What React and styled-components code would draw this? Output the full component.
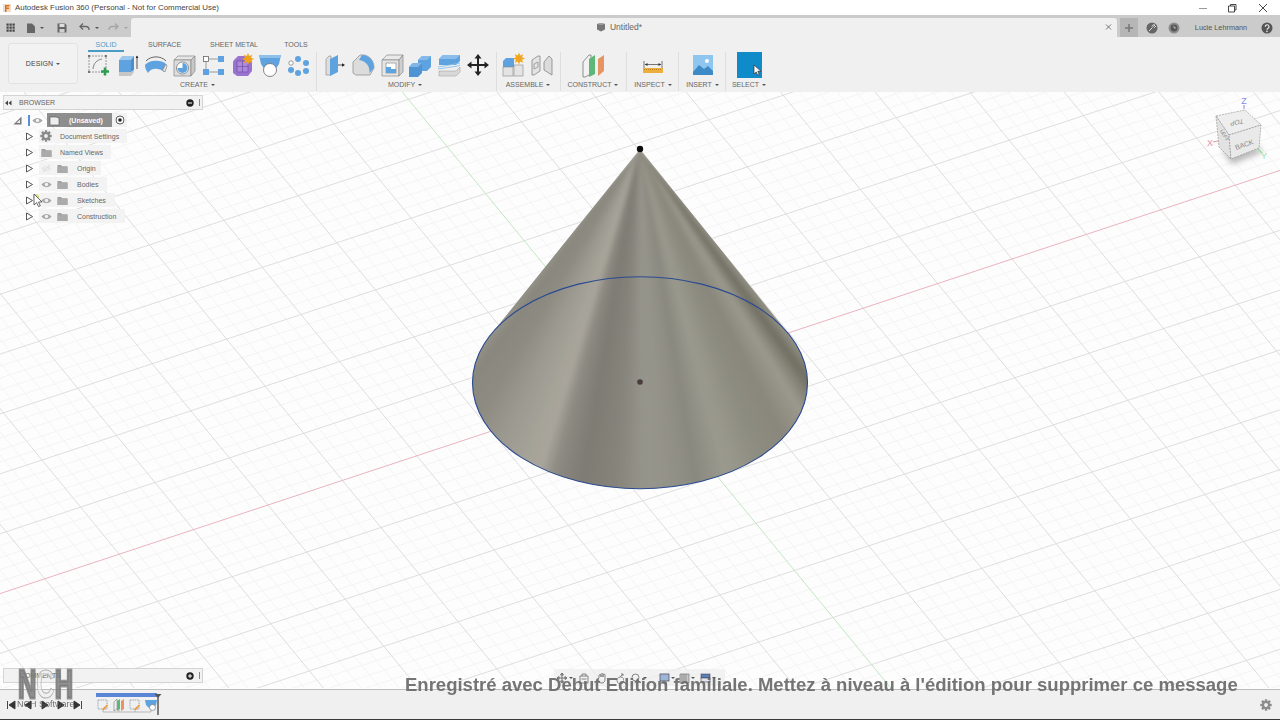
import React from 'react';
import styled, { createGlobalStyle } from 'styled-components';

const GlobalStyle = createGlobalStyle`
  html, body { margin: 0; padding: 0; background: #fff; }
  #root { width: 1280px; height: 720px; overflow: hidden; }
  * { box-sizing: border-box; }
`;

const Window = styled.div`
  position: relative;
  width: 1280px;
  height: 720px;
  display: flex;
  flex-direction: column;
  overflow: hidden;
  font-family: "Liberation Sans", Arial, sans-serif;
  color: #666;
  filter: blur(0.25px);
`;

/* title bar */
const TitleBar = styled.div`
  height: 15px;
  flex: none;
  display: flex;
  align-items: center;
  background: #fff;
  padding-left: 3px;
`;
const TitleText = styled.span`
  margin-left: 4px;
  font-size: 7.9px;
  color: #444;
  white-space: nowrap;
`;
const WindowButtons = styled.div`
  margin-left: auto;
  display: flex;
  align-items: center;
  gap: 17px;
  padding-right: 11px;
  & > :last-child { margin-left: 2px; }
`;

/* tab strip */
const TabStrip = styled.div`
  height: 22px;
  flex: none;
  display: flex;
  align-items: stretch;
  background: #cbcbcb;
  padding-top: 3px;
`;
const QuickAccess = styled.div`
  width: 131px;
  flex: none;
  display: flex;
  align-items: center;
  padding-left: 6px;
`;
const QuickSlot = styled.span`
  display: flex;
  flex: none;
  align-items: center;
  justify-content: center;
  width: ${p => p.$w}px;
`;
const Caret = styled.i`
  display: inline-block;
  flex: none;
  width: 0;
  height: 0;
  margin-left: ${p => p.$gap ?? 3}px;
  border-left: 2px solid transparent;
  border-right: 2px solid transparent;
  border-top: 2.5px solid ${p => p.$color || '#555'};
`;
const DocTab = styled.div`
  width: 986px;
  flex: none;
  display: flex;
  align-items: center;
  justify-content: center;
  position: relative;
  background: #f0f0f0;
  border-radius: 3px 3px 0 0;
  font-size: 8.5px;
  color: #666;
  gap: 4px;
  padding: 0 10px 1px 0;
`;
const TabClose = styled.span`
  position: absolute;
  right: 3px;
  top: 4px;
  display: flex;
`;
const UserArea = styled.div`
  flex: 1;
  display: flex;
  align-items: center;
  font-size: 7.3px;
  color: #555;
  padding-left: 3px;
`;
const AddTab = styled.div`
  width: 18px;
  height: 19px;
  flex: none;
  display: flex;
  align-items: center;
  justify-content: center;
  background: #b6b6b6;
  margin-right: 5px;
`;
const UserSlot = styled.div`
  width: ${p => p.$w}px;
  flex: none;
  display: flex;
  align-items: center;
  justify-content: center;
  white-space: nowrap;
`;

/* ribbon */
const Ribbon = styled.div`
  height: 55px;
  flex: none;
  display: flex;
  background: #f0f0f0;
  padding-left: 8px;
  position: relative;
`;
const DesignButton = styled.div`
  width: 70px;
  height: 41px;
  margin-top: 6px;
  flex: none;
  display: flex;
  align-items: center;
  justify-content: center;
  background: #f2f2f2;
  border: 1px solid #e2e2e2;
  border-radius: 3px;
  font-size: 7px;
  color: #444;
  letter-spacing: 0.1px;
`;
const RibbonBody = styled.div`
  margin-left: 6px;
  display: flex;
  flex-direction: column;
`;
const ModeTabs = styled.div`
  display: flex;
  height: 15px;
  padding-top: 3px;
  padding-left: 4px;
`;
const ModeTab = styled.div`
  width: ${p => p.$w}px;
  flex: none;
  height: 12px;
  margin-right: ${p => p.$gap}px;
  font-size: 7px;
  line-height: 9px;
  text-align: center;
  white-space: nowrap;
  color: ${p => (p.$active ? '#4a9cc7' : '#666')};
  border-bottom: ${p => (p.$active ? '2px solid #4a9cc7' : 'none')};
`;
const ToolGroups = styled.div`
  display: flex;
`;
const ToolGroup = styled.div`
  width: ${p => p.$w}px;
  flex: none;
  height: 39px;
  display: flex;
  flex-direction: column;
  align-items: center;
  border-right: ${p => (p.$last ? 'none' : '1px solid #dedede')};
  margin-right: ${p => (p.$last ? 0 : 1)}px;
`;
const ToolRow = styled.div`
  display: flex;
  height: 26px;
  padding-left: ${p => p.$pad || 0}px;
  justify-content: ${p => (p.$pad === undefined ? 'center' : 'flex-start')};
  width: 100%;
`;
const ToolSlot = styled.div`
  width: ${p => p.$w}px;
  flex: none;
  display: flex;
  align-items: center;
  justify-content: center;
`;
const GroupLabel = styled.div`
  font-size: 7px;
  color: #666;
  line-height: 9px;
  margin-top: 2px;
  padding-right: ${p => p.$nudge || 0}px;
  white-space: nowrap;
  display: flex;
  align-items: center;
`;
const IconSvg = styled.svg`
  display: block;
  flex: none;
`;
const SelectBox = styled.div`
  position: relative;
  width: 25px;
  height: 26px;
  background: #0f8bc9;
`;
const SelectCursor = styled.svg`
  position: absolute;
  left: 16px;
  top: 12px;
`;

/* viewport */
const Viewport = styled.div`
  position: relative;
  flex: 1;
  background: #fdfdfd;
  overflow: hidden;
`;
const Scene = styled.svg`
  position: absolute;
  inset: 0;
  display: block;
`;
const Panel = styled.div`
  position: absolute;
  left: 3px;
  width: 200px;
`;
const PanelHeader = styled.div`
  height: 15px;
  display: flex;
  align-items: center;
  background: #f2f2f2;
  border: 1px solid #d4d4d4;
  font-size: 7px;
  color: #666;
`;
const PanelTitle = styled.span`
  margin-left: ${p => p.$left}px;
`;
const PanelActions = styled.div`
  margin-left: auto;
  display: flex;
  align-items: center;
  gap: 5px;
  padding-right: 2px;
`;
const PanelBar = styled.span`
  width: 1px;
  height: 7px;
  background: #888;
`;
const Tree = styled.div`
  padding-top: 2px;
`;
const TreeRow = styled.div`
  height: 16px;
  display: flex;
  align-items: center;
`;
const Expander = styled.span`
  width: 36px;
  flex: none;
  display: flex;
  justify-content: flex-end;
  padding-right: 5px;
`;
const RootMark = styled.span`
  display: flex;
  align-items: center;
  width: 44px;
  flex: none;
  padding-left: 10px;
`;
const RootBar = styled.span`
  width: 2px;
  height: 11px;
  flex: none;
  background: #5d8fd6;
  margin: 0 2px 0 6px;
`;
const RowPill = styled.div`
  height: 14px;
  display: flex;
  align-items: center;
  width: ${p => p.$w}px;
  background: rgba(242, 242, 242, 0.95);
  padding-left: 1px;
`;
const RowIcon = styled.span`
  width: ${p => p.$w || 12}px;
  flex: none;
  display: flex;
  justify-content: center;
`;
const RowLabel = styled.span`
  font-size: 7px;
  color: #666;
  white-space: nowrap;
  margin-left: ${p => p.$left}px;
`;
const RootLabel = styled.span`
  margin-left: 9px;
  white-space: nowrap;
`;
const RootPill = styled.div`
  height: 14px;
  width: 65px;
  display: flex;
  align-items: center;
  background: #8e8e8e;
  color: #fff;
  font-size: 7px;
  font-weight: bold;
  padding-left: 2px;
`;
const RootEnd = styled.span`
  width: 15px;
  height: 14px;
  background: #f2f2f2;
  display: flex;
  align-items: center;
  justify-content: center;
`;
const Pointer = styled.svg`
  position: absolute;
  left: 33px;
  top: 101px;
`;
const Halo = styled.span`
  position: absolute;
  left: 33px;
  top: 102px;
  width: 6px;
  height: 6px;
  border-radius: 50%;
  background: rgba(205, 205, 90, 0.7);
`;
const NavBar = styled.div`
  position: absolute;
  left: 554px;
  bottom: 3px;
  width: 171px;
  height: 17px;
  display: flex;
  align-items: center;
  background: rgba(238, 238, 238, 0.75);
`;
const NavSlot = styled.span`
  margin-left: ${p => p.$gap}px;
  flex: none;
  display: flex;
  align-items: center;
`;

/* timeline */
const Timeline = styled.div`
  height: 31px;
  flex: none;
  display: flex;
  align-items: center;
  background: #f0f0f0;
  border-top: 1px solid #bdbdbd;
  border-bottom: 1px solid #3a3a3a;
  padding-left: 3px;
`;
const Transport = styled.div`
  display: flex;
  width: 93px;
  flex: none;
  margin-top: 1px;
`;
const TransportSlot = styled.span`
  width: 16.7px;
  flex: none;
  display: flex;
  justify-content: center;
`;
const Track = styled.div`
  position: relative;
  width: 70px;
  height: 29px;
  flex: none;
`;
const TrackBar = styled.div`
  position: absolute;
  left: 0;
  top: 3px;
  width: 61px;
  height: 4px;
  background: #5b86d8;
`;
const TrackIcons = styled.div`
  position: absolute;
  left: -1px;
  top: 7px;
  display: flex;
`;
const SettingsSlot = styled.div`
  margin-left: auto;
  padding-right: 8px;
  display: flex;
`;

/* recorder watermarks */
const LogoMark = styled.div`
  position: absolute;
  left: 18px;
  top: 664px;
  font-size: 41px;
  line-height: 40px;
  font-weight: bold;
  color: rgba(120, 120, 120, 0.8);
  -webkit-text-stroke: 3px rgba(120, 120, 120, 0.8);
  transform: scaleX(0.62);
  transform-origin: left top;
  white-space: nowrap;
`;
const LogoRing = styled.span`
  color: rgba(240, 240, 240, 0.55);
  -webkit-text-stroke: 1px rgba(150, 150, 150, 0.7);
`;
const LogoCaption = styled.div`
  position: absolute;
  left: 17px;
  top: 699px;
  font-size: 9px;
  color: rgba(90, 90, 90, 0.85);
  white-space: nowrap;
`;
const RecorderNote = styled.div`
  position: absolute;
  left: 405px;
  top: 675px;
  font-size: 18.53px;
  line-height: 20px;
  font-weight: bold;
  color: rgba(105, 105, 105, 0.92);
  white-space: nowrap;
`;

const Icon = ({ size = 26, box, children }) => (
  <IconSvg width={size} height={size} viewBox={box || `0 0 ${size} ${size}`}>{children}</IconSvg>
);

const SketchIcon = () => (
  <Icon>
    <rect x="4" y="4" width="17" height="16" fill="none" stroke="#808080" strokeWidth="0.8" strokeDasharray="2 1" />
    <g fill="#555"><circle cx="4" cy="4" r="1" /><circle cx="21" cy="4" r="1" /><circle cx="4" cy="20" r="1" /></g>
    <path d="M8 17C8.5 11 12 8 17 7" fill="none" stroke="#777" strokeWidth="0.9" />
    <path d="M16 19.5h8M20 15.5v8" stroke="#2a9d4e" strokeWidth="2.6" />
  </Icon>
);
const ExtrudeIcon = () => (
  <Icon>
    <polygon points="5,8 8,4 20,4 17,8" fill="#9cc8ee" />
    <polygon points="5,8 17,8 17,20 5,20" fill="#5ea3df" />
    <polygon points="17,8 20,4 20,18 17,20" fill="#4f8fc9" />
    <polygon points="5,20 17,20 20,18 20,20 17,24 5,24" fill="#c6c6c6" />
    <path d="M23 4v13" stroke="#444" strokeWidth="0.9" />
    <path d="M21.7 6L23 3.5 24.3 6z" fill="#222" />
  </Icon>
);
const RevolveIcon = () => (
  <Icon>
    <path d="M3 9C8 3.5 18 3.5 23 9" fill="none" stroke="#666" strokeWidth="1" />
    <path d="M2 13C6 7.5 19 7.5 23 12L21 20C16 15.5 8 15.5 5 21 3 18 2 16 2 13Z" fill="#5ea3df" />
    <path d="M19.5 18L23 12 24 14 22 20Z" fill="#e4e4e4" stroke="#777" strokeWidth="0.6" />
  </Icon>
);
const HoleIcon = () => (
  <Icon>
    <polygon points="3,8 7,4 24,4 20,8" fill="#e6e6e6" stroke="#888" strokeWidth="0.7" />
    <polygon points="3,8 20,8 20,24 3,24" fill="#dcdcdc" stroke="#888" strokeWidth="0.7" />
    <polygon points="20,8 24,4 24,19 20,24" fill="#c8c8c8" stroke="#888" strokeWidth="0.7" />
    <circle cx="11.5" cy="16" r="6" fill="#fff" stroke="#777" strokeWidth="0.8" />
    <path d="M11.5 16V11a5 5 0 1 1-5 5z" fill="#5ea3df" />
  </Icon>
);
const ConstrainIcon = () => (
  <Icon>
    <rect x="3.5" y="4.5" width="5" height="5" fill="#fff" stroke="#666" strokeWidth="0.8" />
    <rect x="18" y="4" width="6" height="6" fill="#5ea3df" />
    <rect x="3" y="17" width="6" height="6" fill="#5ea3df" />
    <rect x="18" y="17" width="6" height="6" fill="#5ea3df" />
    <path d="M9 7h9M6 10v7M9 20h9" stroke="#777" strokeWidth="0.7" />
  </Icon>
);
const FormIcon = () => (
  <Icon>
    <path d="M5 8L9 4H18L23 9V19L19 24H8L4 21V10Z" fill="#9a72cf" />
    <path d="M8 9H19V20H8Z M13.5 9V20 M8 14.5H19" fill="#ac8ad9" stroke="#6f4ea8" strokeWidth="0.7" />
    <path d="M19 1l1.3 3 3-1.2-1.2 3 3 1.3-3 1.2 1.2 3-3-1.2-1.3 3-1.2-3-3 1.2 1.2-3-3-1.2 3-1.3-1.2-3 3 1.2z" fill="#f0a21e" />
  </Icon>
);
const LoftIcon = () => (
  <Icon>
    <polygon points="2,3 24,3 22,12 18,18 8,18 4,12" fill="#5ea3df" />
    <polygon points="2,3 24,3 23,6 3,6" fill="#8ebfe9" />
    <circle cx="13" cy="18" r="6.5" fill="#fff" stroke="#777" strokeWidth="0.9" />
  </Icon>
);
const PatternIcon = () => (
  <Icon>
    <circle cx="5" cy="11" r="2.2" fill="#fff" stroke="#777" strokeWidth="0.7" />
    <g fill="#5ea3df">
      <circle cx="12" cy="7" r="3" /><circle cx="20" cy="11" r="3" /><circle cx="5" cy="18" r="3" />
      <circle cx="12" cy="21" r="3" /><circle cx="20" cy="19" r="3" />
    </g>
  </Icon>
);
const PressPullIcon = () => (
  <Icon>
    <polygon points="5,7 8,4 10,4 10,23 5,23" fill="#dedede" stroke="#888" strokeWidth="0.6" />
    <polygon points="9,7 17,3 17,20 9,24" fill="#5ea3df" />
    <path d="M17 13h5" stroke="#555" strokeWidth="1" />
    <path d="M21 11.3L24 13 21 14.7z" fill="#222" />
  </Icon>
);
const FilletIcon = () => (
  <Icon>
    <path d="M3 10L10 3H14C20 4 24 9 24 16L20 23H6L3 21Z" fill="#dcdcdc" stroke="#888" strokeWidth="0.7" />
    <path d="M12 3C19 3 24 9 24 16L19.5 21C20 14 16 9 9 8Z" fill="#5ea3df" />
  </Icon>
);
const ShellIcon = () => (
  <Icon>
    <polygon points="3,8 8,3 24,3 20,8" fill="#eaeaea" stroke="#888" strokeWidth="0.7" />
    <polygon points="3,8 20,8 20,24 3,24" fill="#e6e6e6" stroke="#888" strokeWidth="0.7" />
    <polygon points="20,8 24,3 24,20 20,24" fill="#cfcfcf" stroke="#888" strokeWidth="0.7" />
    <rect x="7" y="11" width="10" height="10" fill="#fff" stroke="#777" strokeWidth="0.6" />
    <polygon points="7,15 12,15 12,17 17,17 17,21 7,21" fill="#5ea3df" />
  </Icon>
);
const CombineIcon = () => (
  <Icon>
    <polygon points="11,8 15,4 24,4 24,15 20,19 11,19" fill="#5ea3df" />
    <polygon points="11,8 15,4 24,4 20,8" fill="#86bbe9" />
    <polygon points="2,15 6,11 15,11 15,21 11,25 2,25" fill="#4f94d2" />
    <polygon points="2,15 6,11 15,11 11,15" fill="#7fb6e6" />
  </Icon>
);
const OffsetIcon = () => (
  <Icon>
    <polygon points="3,7 7,3 24,3 24,9 20,13 3,13" fill="#5ea3df" />
    <polygon points="3,7 7,3 24,3 20,7" fill="#8abdea" />
    <path d="M2 15L22 11.5 24 11M2 17L22 14 24 13" stroke="#88bfe6" strokeWidth="0.9" fill="none" />
    <polygon points="3,19 20,19 24,15 24,20 20,24 3,24" fill="#d8d8d8" stroke="#999" strokeWidth="0.5" />
  </Icon>
);
const MoveIcon = () => (
  <Icon>
    <path d="M13 2l3.5 4.5H14v5.5h5.5V9.5L24 13l-4.5 3.5V14H14v5.500h2.500L13 24l-3.500-4.500H12V14H6.500v2.500L2 13l4.500-3.500V12H12V6.500H9.500z" fill="#222" />
  </Icon>
);
const ComponentIcon = () => (
  <Icon>
    <polygon points="3,9 6,6 14,6 14,15 3,15" fill="#5ea3df" />
    <rect x="3" y="15" width="10" height="9" fill="#e4e4e4" stroke="#888" strokeWidth="0.6" />
    <rect x="14" y="13" width="9" height="11" fill="#e4e4e4" stroke="#888" strokeWidth="0.6" />
    <path d="M19 0.5l1.2 3 3-1.2-1.2 3 3 1.2-3 1.2 1.2 3-3-1.2-1.2 3-1.2-3-3 1.2 1.2-3-3-1.2 3-1.2-1.2-3 3 1.2z" fill="#f2a51e" />
  </Icon>
);
const JointIcon = () => (
  <Icon>
    <path d="M3 8L9 4H11V19L5 23H3Z" fill="#e4e4e4" stroke="#777" strokeWidth="0.7" />
    <path d="M5 12l4-2v5l-4 2z" fill="none" stroke="#888" strokeWidth="0.7" />
    <path d="M15 10L20 4 23 7V23L15 18Z" fill="#dcdcdc" stroke="#777" strokeWidth="0.7" />
  </Icon>
);
const PlanesIcon = () => (
  <Icon>
    <path d="M2 10L8 3H10V22L4 25H2Z" fill="#f2f2f2" stroke="#777" strokeWidth="0.8" />
    <polygon points="8,7 14,3 14,22 8,25" fill="#5cb876" />
    <polygon points="17,7 23,3 23,19 17,24" fill="#e79463" />
  </Icon>
);
const MeasureIcon = () => (
  <Icon>
    <path d="M4 9v7M22 9v7M5 12.5h16" stroke="#555" strokeWidth="0.8" />
    <path d="M5 12.5l2.500-1.500v3zM21 12.500l-2.500-1.500v3z" fill="#333" />
    <rect x="3" y="16" width="20" height="5" fill="#eeae3e" />
    <path d="M4 17.5h18" stroke="#b5781c" strokeWidth="0.8" strokeDasharray="1 1" />
  </Icon>
);
const ImageIcon = () => (
  <Icon>
    <rect x="3" y="3" width="20" height="20" fill="#8ec6ef" />
    <path d="M3 20L9 13 14 17 18 14 23 19V23H3Z" fill="#3d8ac6" />
    <circle cx="17" cy="9" r="2" fill="#fff" />
  </Icon>
);

const TOOL_GROUPS = [
  { label: 'CREATE', width: 233, slot: 28.7, pad: 0, nudge: 5, icons: [SketchIcon, ExtrudeIcon, RevolveIcon, HoleIcon, ConstrainIcon, FormIcon, LoftIcon, PatternIcon] },
  { label: 'MODIFY', width: 179, slot: 28.8, pad: 1.6, nudge: 4, icons: [PressPullIcon, FilletIcon, ShellIcon, CombineIcon, OffsetIcon, MoveIcon] },
  { label: 'ASSEMBLE', width: 63, slot: 29.5, pad: 0, nudge: 2, icons: [ComponentIcon, JointIcon] },
  { label: 'CONSTRUCT', width: 65, slot: 30, nudge: 2, icons: [PlanesIcon] },
  { label: 'INSPECT', width: 51, slot: 30, icons: [MeasureIcon] },
  { label: 'INSERT', width: 46, slot: 30, icons: [ImageIcon] },
];

/* viewport grid, an affine projection of the ground plane */
const ORIGIN = [640, 382];
const U = [74.4, -24.6];
const V = [38.6, 47.1];
const gridLine = (a, b, dir) => {
  const along = dir === 'u' ? U : V;
  const across = dir === 'u' ? V : U;
  const cx = ORIGIN[0] + across[0] * a;
  const cy = ORIGIN[1] + across[1] * a;
  return { x1: cx - along[0] * b, y1: cy - along[1] * b, x2: cx + along[0] * b, y2: cy + along[1] * b };
};
const gridSteps = [];
for (let i = -75; i <= 75; i++) gridSteps.push(i);

const SHADE_STOPS = [
  [-0.81, [150, 148, 138]], [-0.73, [138, 136, 126]], [-0.59, [142, 140, 130]], [-0.45, [158, 155, 146]],
  [-0.31, [170, 166, 156]], [-0.26, [142, 139, 131]], [-0.17, [126, 123, 115]], [-0.06, [135, 133, 124]],
  [0.02, [151, 150, 140]], [0.09, [148, 147, 137]], [0.17, [138, 137, 127]], [0.27, [155, 154, 143]],
  [0.39, [141, 140, 128]], [0.5, [138, 136, 124]], [0.62, [156, 154, 142]], [0.73, [112, 110, 98]],
  [0.81, [150, 148, 136]],
];
const shadeAt = a => {
  let k = 0;
  while (k < SHADE_STOPS.length - 2 && a > SHADE_STOPS[k + 1][0]) k++;
  const [a0, c0] = SHADE_STOPS[k];
  const [a1, c1] = SHADE_STOPS[k + 1];
  const t = Math.min(1, Math.max(0, (a - a0) / (a1 - a0)));
  return `rgb(${c0.map((c, n) => Math.round(c + (c1[n] - c) * t)).join(',')})`;
};
const APEX = [640, 149];
const BASE = { cx: 640, cy: 382.7, rx: 167.5, ry: 106 };
const TH_START = 3.612;
const TH_END = -0.4704;
const conePoint = (th, grow = 0) => [BASE.cx + (BASE.rx + grow) * Math.cos(th), BASE.cy + (BASE.ry + grow) * Math.sin(th)];

// wedges run past the silhouette so the blur has colour to spread, the clip trims them back
const coneWedges = [];
const WEDGES = 90;
for (let k = -8; k < WEDGES + 8; k++) {
  const p = conePoint(TH_START + ((TH_END - TH_START) * k) / WEDGES, 8);
  const q = conePoint(TH_START + ((TH_END - TH_START) * (k + 1)) / WEDGES, 8);
  const a = ((p[0] + q[0]) / 2 - APEX[0]) / ((p[1] + q[1]) / 2 - APEX[1]);
  coneWedges.push({ points: `${APEX.join(',')} ${p.join(',')} ${q.join(',')}`, fill: shadeAt(a) });
}
const tanL = conePoint(TH_START);
const tanR = conePoint(TH_END);
const coneOutline = `M${APEX.join(' ')}L${tanL.join(' ')}A${BASE.rx} ${BASE.ry} 0 1 0 ${tanR.join(' ')}Z`;

const Ground = () => (
  <g>
    {gridSteps.filter(i => i % 5 !== 0).map(i => (
      <g key={i} stroke="#f1f1f1" strokeWidth="0.8">
        <line {...gridLine(i / 5, 16, 'u')} />
        <line {...gridLine(i / 5, 16, 'v')} />
      </g>
    ))}
    {gridSteps.filter(i => i % 5 === 0 && i !== 0).map(i => (
      <g key={i} stroke="#dadada" strokeWidth="0.9">
        <line {...gridLine(i / 5, 16, 'u')} />
        <line {...gridLine(i / 5, 16, 'v')} />
      </g>
    ))}
    <line {...gridLine(0, 16, 'u')} stroke="#e9b4be" strokeWidth="1" />
    <line {...gridLine(0, 16, 'v')} stroke="#c0e8c0" strokeWidth="1" />
  </g>
);

const Cone = () => (
  <g>
    <defs>
      <clipPath id="coneClip"><path d={coneOutline} /></clipPath>
      <filter id="coneSoft" x="-5%" y="-5%" width="110%" height="110%"><feGaussianBlur stdDeviation="2" /></filter>
    </defs>
    <g clipPath="url(#coneClip)">
      <g filter="url(#coneSoft)">
        {coneWedges.map(w => (
          <polygon key={w.points} points={w.points} fill={w.fill} stroke={w.fill} strokeWidth="1.5" />
        ))}
      </g>
    </g>
    <ellipse cx={BASE.cx} cy={BASE.cy} rx={BASE.rx} ry={BASE.ry} fill="none" stroke="#2a4a92" strokeWidth="1.1" />
    <circle cx={APEX[0]} cy={APEX[1]} r="3.2" fill="#0c0c0c" />
    <circle cx="640" cy="382" r="2.8" fill="#4a3c3c" />
  </g>
);

const ViewCube = () => (
  <g fontFamily="'Liberation Sans', Arial, sans-serif">
    <defs>
      <filter id="cubeShadow" x="-30%" y="-30%" width="160%" height="160%"><feGaussianBlur stdDeviation="3" /></filter>
    </defs>
    <polygon points="1222,150 1232,164 1262,152 1258,146" fill="#b5b5b5" filter="url(#cubeShadow)" />
    <polygon points="1216,116 1245,110 1261,125 1229,135" fill="#eeeeee" stroke="#8a8a8a" strokeWidth="0.6" strokeDasharray="2 1" />
    <polygon points="1216,116 1229,135 1231,159 1219,147" fill="#e2e2e2" stroke="#8a8a8a" strokeWidth="0.6" strokeDasharray="2 1" />
    <polygon points="1229,135 1261,125 1259,148 1231,159" fill="#e9e9e9" stroke="#8a8a8a" strokeWidth="0.6" strokeDasharray="2 1" />
    <text x="0" y="0" fontSize="6.5" fill="#888" textAnchor="middle" transform="translate(1237 120) rotate(170) skewX(-15)">TOP</text>
    <text x="0" y="0" fontSize="7" fill="#888" textAnchor="middle" transform="translate(1245 147) rotate(-18)">BACK</text>
    <text x="0" y="0" fontSize="5" fill="#777" textAnchor="middle" transform="translate(1223 136) rotate(60)">LEFT</text>
    <path d="M1244 109v-4" stroke="#7c7ce0" strokeWidth="0.9" />
    <text x="1244" y="104" fontSize="9" fill="#8a8ae2" textAnchor="middle">Z</text>
    <path d="M1213 142l5-1" stroke="#e58c9c" strokeWidth="0.9" />
    <text x="1210" y="146" fontSize="9" fill="#ea8fa0" textAnchor="middle">X</text>
    <path d="M1258 149l4 4" stroke="#8fe09a" strokeWidth="1.2" />
    <text x="1264" y="159" fontSize="9" fill="#9be6a6" textAnchor="middle">Y</text>
  </g>
);

const TreeArrow = () => (
  <Icon size={9}><path d="M1.5 1l6 3.5-6 3.5z" fill="#fff" stroke="#444" strokeWidth="0.9" /></Icon>
);
const Eye = ({ off }) => (
  <Icon size={11}>
    <path d="M0.5 5.5C3 2 8 2 10.5 5.5 8 9 3 9 0.5 5.5Z" fill={off ? '#e6e6e6' : '#a8a8a8'} />
    <circle cx="5.5" cy="5.5" r="1.7" fill="#f2f2f2" />
    {off && <path d="M2 9.5l7-8" stroke="#d8d8d8" />}
  </Icon>
);
const Folder = () => (
  <Icon size={11}>
    <path d="M0.5 2H4L5 3.2H10.5V10H0.5Z" fill="#a0a0a0" />
    <rect x="0.5" y="4" width="10" height="6" fill="#ababab" />
  </Icon>
);
const Gear = ({ fill = '#8a8a8a', hole = '#f0f0f0' }) => (
  <Icon size={12}>
    <g fill={fill}>
      <circle cx="6" cy="6" r="4" />
      {[0, 45, 90, 135].map(r => <rect key={r} x="4.8" y="0.3" width="2.4" height="11.4" transform={`rotate(${r} 6 6)`} />)}
    </g>
    <circle cx="6" cy="6" r="1.9" fill={hole} />
  </Icon>
);
const RoundSign = ({ plus }) => (
  <Icon size={8}>
    <circle cx="4" cy="4" r="3.7" fill="#222" />
    <path d={plus ? 'M2 4h4M4 2v4' : 'M2 4h4'} stroke="#fff" strokeWidth="1" />
  </Icon>
);

const NavGlyph = ({ d, color = '#777' }) => (
  <Icon size={12}><path d={d} fill="none" stroke={color} strokeWidth="0.9" /></Icon>
);

const TrackGlyph = ({ kind }) => (
  <Icon size={16}>
    {kind === 'plane' ? (
      <g>
        <path d="M3 5L6 2V12L3 14Z" fill="#f4f4f4" stroke="#777" strokeWidth="0.6" />
        <polygon points="6,4 9,2 9,12 6,14" fill="#5cb876" />
        <polygon points="10,4 13,2 13,12 10,14" fill="#e79463" />
      </g>
    ) : kind === 'loft' ? (
      <g>
        <polygon points="2,3 14,3 13,8 10,11 6,11 3,8" fill="#5ea3df" />
        <circle cx="9.5" cy="10.5" r="3" fill="#fff" stroke="#777" strokeWidth="0.7" />
      </g>
    ) : (
      <g>
        <rect x="3" y="3" width="9" height="9" fill="none" stroke="#7a8aa8" strokeWidth="0.7" strokeDasharray="1.5 0.8" />
        <path d="M7 12l5-4.5 1 1-4.5 5z" fill="#ee9a45" />
      </g>
    )}
  </Icon>
);

const TRANSPORT = [
  'M1.5 1v8M9 1L3 5l6 4z',
  'M8 1L2 5l6 4z',
  'M2 1l6 4-6 4z',
  'M2 1l6 4-6 4z',
  'M8.5 1v8M1 1l6 4-6 4z',
];

export default function App() {
  return (
    <Window>
      <GlobalStyle />
      <TitleBar>
        <Icon size={8}>
          <rect width="8" height="8" fill="#f3dcc4" />
          <path d="M2 1h4.5v1.5H3.5v1h2.5V5H3.5v3H2z" fill="#d9722a" />
        </Icon>
        <TitleText>Autodesk Fusion 360 (Personal - Not for Commercial Use)</TitleText>
        <WindowButtons>
          <Icon size={12}><path d="M2 6.5h8" stroke="#9a9a9a" strokeWidth="1" /></Icon>
          <Icon size={12}><path d="M2.5 4h6v6h-6zM4.5 4V2.5h5.5V8H8.5" fill="none" stroke="#333" strokeWidth="0.9" /></Icon>
          <Icon size={12}><path d="M2 2l8 8M10 2l-8 8" stroke="#333" strokeWidth="0.9" /></Icon>
        </WindowButtons>
      </TitleBar>

      <TabStrip>
        <QuickAccess>
          <QuickSlot $w={9}>
            <Icon size={9}>
              <g fill="#444">
                {[0.5, 3.5, 6.5].flatMap(x => [0.5, 3.5, 6.5].map(y => <rect key={`${x}-${y}`} x={x} y={y} width="2.2" height="2.2" />))}
              </g>
            </Icon>
          </QuickSlot>
          <QuickSlot $w={40}>
            <Icon size={10}><path d="M1 0.5H6L9 3.5V10H1z" fill="#666" /></Icon>
            <Caret $gap={4} />
          </QuickSlot>
          <QuickSlot $w={14}>
            <Icon size={10}><path d="M0.5 0.5H8L9.5 2V9.5H0.5z" fill="#666" /><rect x="2.5" y="1" width="5" height="3" fill="#ddd" /><rect x="2.5" y="6" width="5" height="3.5" fill="#cfcfcf" /></Icon>
          </QuickSlot>
          <QuickSlot $w={39}>
            <Icon size={11}><path d="M4 1.5L1 4.5 4 7.5M1.5 4.5H7c2 0 3 1.500 3 3.500" fill="none" stroke="#666" strokeWidth="1.3" /></Icon>
            <Caret $gap={5} />
          </QuickSlot>
          <QuickSlot $w={20}>
            <Icon size={11}><path d="M7 1.5L10 4.5 7 7.5M9.5 4.5H4c-2 0-3 1.500-3 3.500" fill="none" stroke="#a5a5a5" strokeWidth="1.3" /></Icon>
            <Caret $color="#a5a5a5" $gap={5} />
          </QuickSlot>
        </QuickAccess>
        <DocTab>
          <Icon size={10}>
            <path d="M1 2L5 1 9 2V7.5L5 9.5 1 7.5z" fill="#777" />
            <path d="M1 2L5 3 9 2 5 1z" fill="#a5a5a5" />
          </Icon>
          Untitled*
          <TabClose>
            <Icon size={10}><path d="M2 2.5l5 5M7 2.5l-5 5" stroke="#666" strokeWidth="0.9" /></Icon>
          </TabClose>
        </DocTab>
        <UserArea>
          <AddTab>
            <Icon size={10}><path d="M1 5h8M5 1v8" stroke="#777" strokeWidth="1.5" /></Icon>
          </AddTab>
          <UserSlot $w={18}>
            <Icon size={12}>
              <circle cx="6" cy="6" r="5.5" fill="#666" />
              <path d="M3 9L6.5 5.5M6 4.5a2 2 0 0 1 3-1.5L7.5 4.5l1 1L10 4" stroke="#ddd" strokeWidth="1" fill="none" />
            </Icon>
          </UserSlot>
          <UserSlot $w={26}>
            <Icon size={12}>
              <circle cx="6" cy="6" r="5.5" fill="#8c8c8c" />
              <circle cx="6" cy="6" r="3.4" fill="#555" />
              <path d="M6 3.8V6h2" stroke="#ddd" strokeWidth="0.7" fill="none" />
            </Icon>
          </UserSlot>
          <UserSlot $w={68}>Lucie Lehrmann</UserSlot>
          <UserSlot $w={24}>
            <Icon size={12}>
              <circle cx="6" cy="6" r="5.5" fill="#555" />
              <path d="M4.2 4.7a1.9 1.9 0 1 1 2.7 1.7C6.2 6.8 6 7 6 7.8" fill="none" stroke="#e5e5e5" strokeWidth="1.2" />
              <circle cx="6" cy="9.4" r="0.8" fill="#e5e5e5" />
            </Icon>
          </UserSlot>
        </UserArea>
      </TabStrip>

      <Ribbon>
        <DesignButton>DESIGN<Caret /></DesignButton>
        <RibbonBody>
          <ModeTabs>
            <ModeTab $w={36} $gap={24} $active>SOLID</ModeTab>
            <ModeTab $w={32} $gap={30}>SURFACE</ModeTab>
            <ModeTab $w={46} $gap={27}>SHEET METAL</ModeTab>
            <ModeTab $w={26} $gap={0}>TOOLS</ModeTab>
          </ModeTabs>
          <ToolGroups>
            {TOOL_GROUPS.map(g => (
              <ToolGroup key={g.label} $w={g.width}>
                <ToolRow $pad={g.pad}>
                  {g.icons.map((Glyph, i) => (
                    <ToolSlot key={i} $w={g.slot}><Glyph /></ToolSlot>
                  ))}
                </ToolRow>
                <GroupLabel $nudge={g.nudge}>{g.label}<Caret /></GroupLabel>
              </ToolGroup>
            ))}
            <ToolGroup $w={44} $last>
              <ToolRow>
                <ToolSlot $w={30}>
                  <SelectBox>
                    <SelectCursor width="9" height="12" viewBox="0 0 9 12">
                      <path d="M1 1v9l2.2-2 1.5 3.2 1.5-.7L4.8 7.3H8z" fill="#fff" stroke="#333" strokeWidth="0.7" />
                    </SelectCursor>
                  </SelectBox>
                </ToolSlot>
              </ToolRow>
              <GroupLabel>SELECT<Caret /></GroupLabel>
            </ToolGroup>
          </ToolGroups>
        </RibbonBody>
      </Ribbon>

      <Viewport>
        <Scene width="1280" height="596" viewBox="0 92 1280 596">
          <Ground />
          <Cone />
          <ViewCube />
        </Scene>

        <Panel style={{ top: 3 }}>
          <PanelHeader>
            <Icon size={8}><path d="M4 1.5L1 4l3 2.5zM7.5 1.5L4.5 4l3 2.5z" fill="#444" /></Icon>
            <PanelTitle $left={7}>BROWSER</PanelTitle>
            <PanelActions><RoundSign /><PanelBar /></PanelActions>
          </PanelHeader>
          <Tree>
            <TreeRow>
              <RootMark>
                <Icon size={9}><path d="M8.5 0.5V8.5H0.5z" fill="#777" /><path d="M7 3.5V7H3.5z" fill="#eee" /></Icon>
                <RootBar />
                <Eye />
              </RootMark>
              <RootPill>
                <Icon size={11}><path d="M1 2h6l3 1v7H1z" fill="#eee" stroke="#555" strokeWidth="0.6" /></Icon>
                <RootLabel>(Unsaved)</RootLabel>
              </RootPill>
              <RootEnd>
                <Icon size={10}><circle cx="5" cy="5" r="4" fill="#fff" stroke="#333" strokeWidth="0.8" /><circle cx="5" cy="5" r="1.8" fill="#222" /></Icon>
              </RootEnd>
            </TreeRow>
            <TreeRow>
              <Expander><TreeArrow /></Expander>
              <RowPill $w={88}><RowIcon><Gear /></RowIcon><RowLabel $left={8}>Document Settings</RowLabel></RowPill>
            </TreeRow>
            <TreeRow>
              <Expander><TreeArrow /></Expander>
              <RowPill $w={72}><RowIcon><Folder /></RowIcon><RowLabel $left={8}>Named Views</RowLabel></RowPill>
            </TreeRow>
            {[
              { name: 'Origin', w: 62, off: true },
              { name: 'Bodies', w: 68 },
              { name: 'Sketches', w: 76 },
              { name: 'Construction', w: 86 },
            ].map(row => (
              <TreeRow key={row.name}>
                <Expander><TreeArrow /></Expander>
                <RowPill $w={row.w}>
                  <RowIcon><Eye off={row.off} /></RowIcon>
                  <RowIcon $w={20}><Folder /></RowIcon>
                  <RowLabel $left={5}>{row.name}</RowLabel>
                </RowPill>
              </TreeRow>
            ))}
          </Tree>
        </Panel>
        <Halo />
        <Pointer width="10" height="15" viewBox="0 0 10 15">
          <path d="M1 1v11l2.7-2.4 1.8 4 1.8-.8-1.8-3.8H9z" fill="#fff" stroke="#444" strokeWidth="0.8" />
        </Pointer>

        <Panel style={{ bottom: 6 }}>
          <PanelHeader>
            <PanelTitle $left={16}>COMMENTS</PanelTitle>
            <PanelActions><RoundSign plus /><PanelBar /></PanelActions>
          </PanelHeader>
        </Panel>

        <NavBar>
          <NavSlot $gap={2}><NavGlyph color="#666" d="M6 1v10M1 6h10M6 1L4.5 3h3zM6 11l-1.5-2h3zM1 6l2-1.5v3zM11 6L9 4.5v3z" /><Caret $gap={1} /></NavSlot>
          <NavSlot $gap={5}><NavGlyph d="M2 4h8v7H2zM4 4V2h4v2M3.5 7h5" /></NavSlot>
          <NavSlot $gap={6}><NavGlyph d="M3 6V3.5a1 1 0 0 1 2 0V5 2.5a1 1 0 0 1 2 0V5 3a1 1 0 0 1 2 0v4c0 2-1 4-3 4S3 10 2 7z" /></NavSlot>
          <NavSlot $gap={4}><NavGlyph d="M5 8.5a3.5 3.5 0 1 0 0-.1M8 5l3-3M9 2h2v2" /></NavSlot>
          <NavSlot $gap={6}><NavGlyph d="M5.5 9a3.5 3.5 0 1 0 0-7 3.5 3.5 0 0 0 0 7zM8 8l3 3" /><Caret $gap={1} /></NavSlot>
          <NavSlot $gap={11}>
            <Icon size={12}><rect x="2" y="2" width="9" height="7" fill="#9db5d6" stroke="#556" strokeWidth="0.8" /><path d="M4 11h5" stroke="#556" /></Icon><Caret $gap={1} />
          </NavSlot>
          <NavSlot $gap={3}>
            <Icon size={12}><path d="M2 2h9v9H2zM4 2v9M6 2v9M8 2v9" fill="#c8c8c8" stroke="#777" strokeWidth="0.7" /></Icon><Caret $gap={1} />
          </NavSlot>
          <NavSlot $gap={4}>
            <Icon size={12}><rect x="2" y="2" width="9" height="4" fill="#5d7fb8" stroke="#445" strokeWidth="0.6" /><rect x="2" y="6" width="9" height="4" fill="#dfe6f2" stroke="#445" strokeWidth="0.6" /></Icon><Caret $gap={1} />
          </NavSlot>
        </NavBar>
      </Viewport>

      <Timeline>
        <Transport>
          {TRANSPORT.map((d, i) => (
            <TransportSlot key={i}>
              <Icon size={10}><path d={d} fill="#333" stroke="#333" strokeWidth="0.9" /></Icon>
            </TransportSlot>
          ))}
        </Transport>
        <Track>
          <TrackBar />
          <TrackIcons>
            <TrackGlyph kind="sketch" />
            <TrackGlyph kind="plane" />
            <TrackGlyph kind="sketch" />
            <TrackGlyph kind="loft" />
          </TrackIcons>
          <Scene width="70" height="29" viewBox="0 0 70 29">
            <path d="M7 20v2h48v-2M23 20v2M39 20v2" fill="none" stroke="#aaa" strokeWidth="0.8" />
            <path d="M62 6v19" stroke="#333" strokeWidth="1.2" />
            <path d="M58.5 4h7L62 8z" fill="#555" />
          </Scene>
        </Track>
        <SettingsSlot><Gear /></SettingsSlot>
      </Timeline>

      <LogoMark>N<LogoRing>C</LogoRing>H</LogoMark>
      <LogoCaption>NCH Software</LogoCaption>
      <RecorderNote>Enregistré avec Debut Edition familiale. Mettez à niveau à l'édition pour supprimer ce message</RecorderNote>
    </Window>
  );
}
